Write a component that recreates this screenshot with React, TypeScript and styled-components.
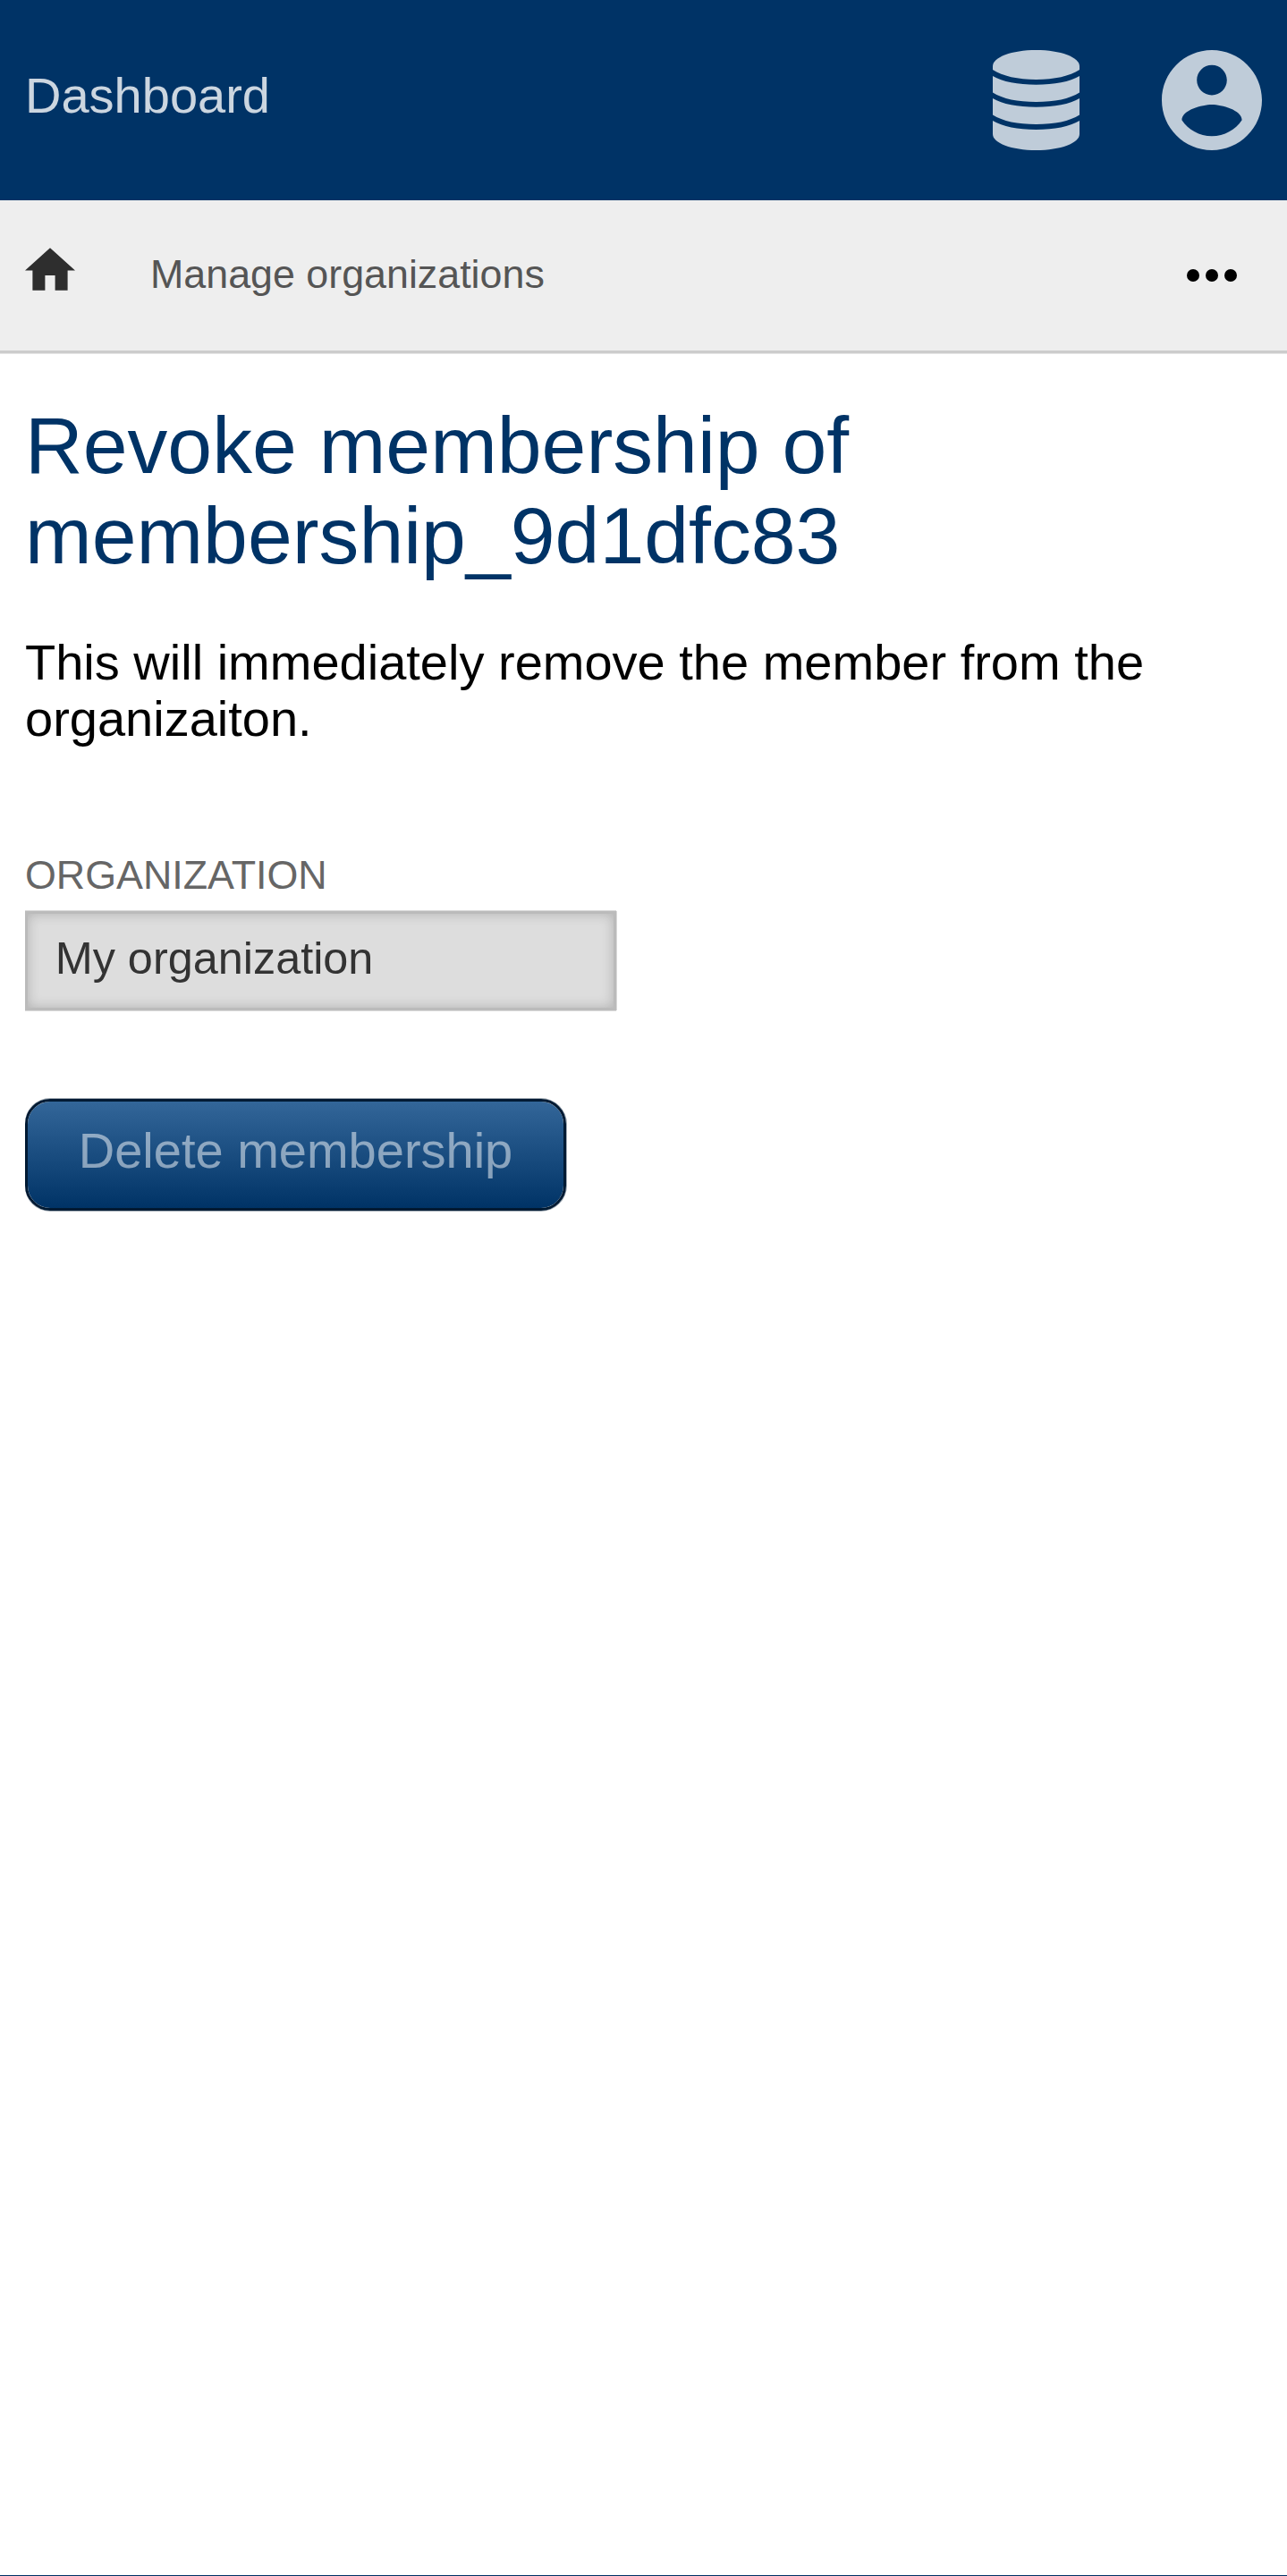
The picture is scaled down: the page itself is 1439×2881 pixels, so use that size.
import React from "react";
import styled, { createGlobalStyle } from "styled-components";

const GlobalStyle = createGlobalStyle`
  *, *::before, *::after { box-sizing: border-box; }
  html, body { margin: 0; padding: 0; }
  body {
    background: #fff;
    color: #000;
    font-family: "Liberation Sans", Arial, sans-serif;
    font-size: 56px;
  }
`;

const Page = styled.div`
  display: flex;
  flex-direction: column;
  width: 100%;
  height: 2881px;
  overflow: hidden;
`;

const Header = styled.header`
  display: flex;
  align-items: flex-start;
  justify-content: space-between;
  height: 224px;
  flex: none;
  padding: 56px 28px;
  background: #003366;
`;

const Brand = styled.a`
  margin-top: 19px;
  line-height: 63px;
  color: rgba(255, 255, 255, 0.8);
  text-decoration: none;
`;

const HeaderActions = styled.div`
  display: flex;
  gap: 92px;
  color: #bfccd9;
`;

const HeaderIcon = styled.svg<{ $width: number }>`
  display: block;
  width: ${(p) => p.$width}px;
  height: 112px;
  fill: currentColor;
`;

const NavBar = styled.nav`
  display: flex;
  align-items: flex-start;
  flex: none;
  height: 171px;
  padding: 53px 56px 0 28px;
  background: #eee;
  border-bottom: 3px solid #ccc;
  box-shadow: 0 1px 0 #e5e5e5;
`;

const HomeIcon = styled.svg`
  display: block;
  width: 56px;
  height: 48px;
  fill: #2e2e2e;
`;

const NavLink = styled.a`
  margin-left: 84px;
  margin-top: 3px;
  flex: 1;
  font-size: 44.8px;
  line-height: 53px;
  color: #555;
  text-decoration: none;
`;

const MoreIcon = styled.svg`
  display: block;
  width: 56px;
  height: 14px;
  margin-top: 24px;
  fill: #000;
`;

const Main = styled.main`
  display: flex;
  flex-direction: column;
  align-items: flex-start;
  flex: 1;
  padding: 53px 28px 0;
`;

const Title = styled.h1`
  margin: 0;
  font-size: 89.6px;
  font-weight: 400;
  line-height: 101px;
  color: #003366;
`;

const Description = styled.p`
  margin: 59px 0 0;
  line-height: 63px;
`;

const Field = styled.label`
  display: flex;
  flex-direction: column;
  margin-top: 117px;
`;

const FieldName = styled.span`
  font-size: 44.8px;
  line-height: 53px;
  text-transform: uppercase;
  color: #666;
`;

const Input = styled.input`
  width: 661px;
  height: 111px;
  margin-top: 14px;
  padding: 0 28px 6px 30.7px;
  border: 3px solid #bbb;
  border-radius: 0;
  background: #ddd;
  box-shadow:
    0 -1px 0 #d8d8d8,
    0 1px 0 #d8d8d8,
    1px 0 0 #d8d8d8,
    inset 0 0 14px rgba(0, 0, 0, 0.2);
  color: #333;
  font: inherit;
  font-size: 50.4px;
`;

const SubmitButton = styled.button`
  width: 605px;
  height: 125px;
  margin-top: 99px;
  padding: 0 0 10px;
  border: 3px solid #001a33;
  border-radius: 28px;
  background: linear-gradient(#336699, #003366) padding-box;
  box-shadow:
    0 -1px 0 #a3acb5,
    0 1px 0 #a3acb5,
    1px 0 0 #a3acb5;
  color: rgba(255, 255, 255, 0.5);
  font: inherit;
  line-height: 63px;
`;

const Footer = styled.footer`
  flex: none;
  height: 1px;
  background: #003366;
`;

export default function App() {
  return (
    <Page>
      <GlobalStyle />
      <Header>
        <Brand>Dashboard</Brand>
        <HeaderActions>
          <HeaderIcon $width={97} viewBox="0 0 97 112" aria-label="Datasets">
            <path d="M0 18C0 8 21 0 48.500 0S97 8 97 18V22C86 29 69 33 48.500 33S11 29 0 22Z" />
            <path d="M0 29C11 35.500 28 38.700 48.500 38.700S86 35.500 97 29V47.500C86 54.500 69 58 48.500 58S11 54.500 0 47.500Z" />
            <path d="M0 54C11 60.500 28 63.700 48.500 63.700S86 60.500 97 54V72.500C86 79.500 69 83 48.500 83S11 79.500 0 72.500Z" />
            <path d="M0 79C11 85.500 28 88.900 48.500 88.900S86 85.500 97 79V94C97 104 76 112 48.500 112S0 104 0 94Z" />
          </HeaderIcon>
          <HeaderIcon $width={112} viewBox="2 2 20 20" aria-label="Account">
            <path d="M12 2C6.480 2 2 6.480 2 12s4.480 10 10 10 10-4.480 10-10S17.520 2 12 2zm0 3c1.660 0 3 1.340 3 3s-1.340 3-3 3-3-1.340-3-3 1.340-3 3-3zm0 14.200c-2.500 0-4.710-1.280-6-3.220.030-1.990 4-3.080 6-3.080 1.990 0 5.970 1.090 6 3.080-1.290 1.940-3.500 3.220-6 3.220z" />
          </HeaderIcon>
        </HeaderActions>
      </Header>
      <NavBar>
        <HomeIcon viewBox="2 3 20 17" aria-label="Home">
          <path d="M10 20v-6h4v6h5v-8h3L12 3 2 12h3v8z" />
        </HomeIcon>
        <NavLink>Manage organizations</NavLink>
        <MoreIcon viewBox="0 0 56 14" aria-label="More">
          <circle cx="7" cy="7" r="7" />
          <circle cx="28" cy="7" r="7" />
          <circle cx="49" cy="7" r="7" />
        </MoreIcon>
      </NavBar>
      <Main>
        <Title>
          Revoke membership of
          <br />
          membership_9d1dfc83
        </Title>
        <Description>
          This will immediately remove the member from the organizaiton.
        </Description>
        <Field>
          <FieldName>Organization</FieldName>
          <Input value="My organization" readOnly />
        </Field>
        <SubmitButton type="button">Delete membership</SubmitButton>
      </Main>
      <Footer />
    </Page>
  );
}
